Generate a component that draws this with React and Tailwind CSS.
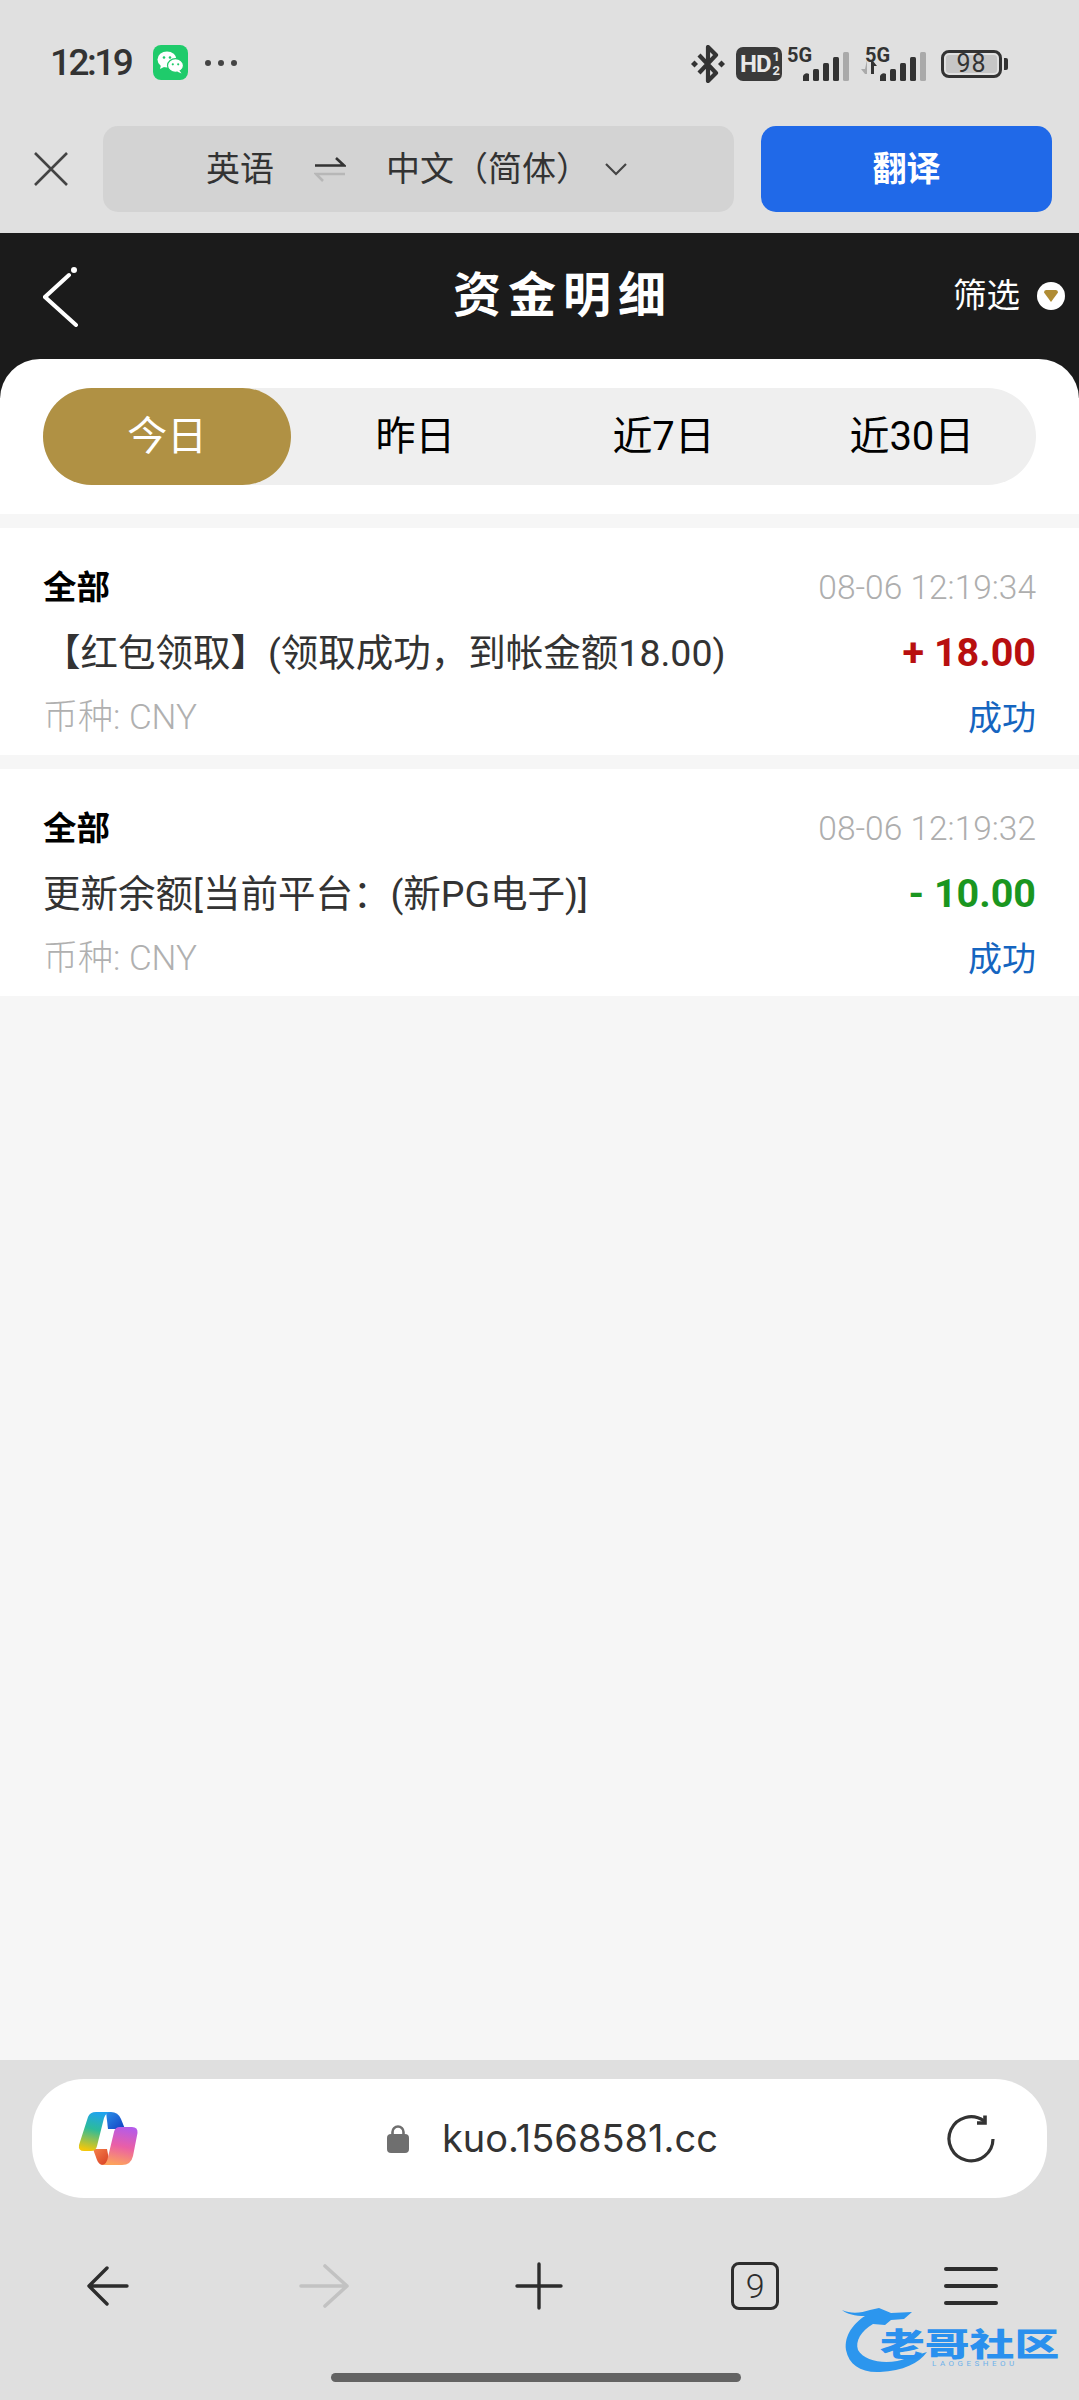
const records = [
  {
    time: '08-06 12:19:34',
    title: '【红包领取】(领取成功，到帐金额18.00)',
    amount: '+ 18.00',
    amountClass: 'text-[#b80f0f]',
  },
  {
    time: '08-06 12:19:32',
    title: '更新余额[当前平台：(新PG电子)]',
    amount: '- 10.00',
    amountClass: 'text-[#1a961f]',
  },
]

function WeChatIcon() {
  return (
    <svg width="35" height="35" viewBox="0 0 35 35" aria-hidden>
      <rect width="35" height="35" rx="8" fill="#1fcb6b" />
      <ellipse cx="14" cy="14.5" rx="9.5" ry="8" fill="#fff" />
      <path d="M8 20l-1 4 5-2.5z" fill="#fff" />
      <ellipse cx="22.5" cy="20.5" rx="8" ry="6.8" fill="#fff" stroke="#1fcb6b" strokeWidth="1.2" />
      <path d="M26.5 25.5l2 3-4.500-2z" fill="#fff" />
      <circle cx="11" cy="12.5" r="1.3" fill="#1fcb6b" />
      <circle cx="17" cy="12.5" r="1.3" fill="#1fcb6b" />
      <circle cx="19.8" cy="19.3" r="1.1" fill="#1fcb6b" />
      <circle cx="25.2" cy="19.3" r="1.1" fill="#1fcb6b" />
    </svg>
  )
}

function BluetoothIcon() {
  return (
    <svg width="34" height="38" viewBox="0 0 34 38" fill="none" stroke="#333" strokeWidth="4.2" aria-hidden>
      <path d="M8 10l17 18-8 8V2l8 8L8 28" strokeLinejoin="round" />
      <path d="M3.500 15.500l3.500 3.500-3.500 3.500L0 19z" fill="#333" stroke="none" />
      <path d="M30.500 15.500l3.500 3.500-3.500 3.500L27 19z" fill="#333" stroke="none" />
    </svg>
  )
}

function SignalBars({ arrows }) {
  return (
    <svg width={arrows ? 65 : 46} height="30" viewBox={arrows ? '-19 0 65 30' : '0 0 46 30'} aria-hidden>
      {arrows && (
        <>
          <path d="M-13 8v14h-2l-4-5h4" fill="#aaa" />
          <path d="M-9 22V9h2l4 5h-3v8z" fill="#333" />
        </>
      )}
      <path d="M0 24a4 4 0 0 1 6-2v7H0z" fill="#333" />
      <rect x="10" y="17" width="6" height="12" rx="1.5" fill="#333" />
      <rect x="20" y="11" width="6" height="18" rx="1.5" fill="#333" />
      <rect x="30" y="5" width="6" height="24" rx="1.5" fill="#333" />
      <rect x="40" y="0" width="6" height="29" rx="1.5" fill="#aaa" />
    </svg>
  )
}

function SwapIcon() {
  return (
    <svg width="32" height="26" viewBox="0 0 32 26" fill="none" strokeWidth="2.6" aria-hidden>
      <path d="M1 9.500h29L22 2" stroke="#333" />
      <path d="M31 18H2l7 7" stroke="#b7b7b7" />
    </svg>
  )
}

function CopilotLogo() {
  return (
    <svg width="60" height="56" viewBox="0 0 60 56" aria-hidden>
      <defs>
        <linearGradient id="cpLeft" x1="0.6" y1="0" x2="0.4" y2="1">
          <stop offset="0" stopColor="#1fa3ef" />
          <stop offset="0.45" stopColor="#2dbb9a" />
          <stop offset="1" stopColor="#f2c70c" />
        </linearGradient>
        <linearGradient id="cpRight" x1="0.6" y1="0" x2="0.4" y2="1">
          <stop offset="0" stopColor="#b55be8" />
          <stop offset="0.5" stopColor="#ea5fa6" />
          <stop offset="1" stopColor="#fda35c" />
        </linearGradient>
        <linearGradient id="cpTop" x1="0" y1="0" x2="1" y2="1">
          <stop offset="0" stopColor="#2a8fe8" />
          <stop offset="1" stopColor="#123fc2" />
        </linearGradient>
        <linearGradient id="cpBottom" x1="0" y1="0" x2="1" y2="1">
          <stop offset="0" stopColor="#f5814c" />
          <stop offset="1" stopColor="#d63c22" />
        </linearGradient>
      </defs>
      <path d="M28 1h5q7 0 10 7l4 10H30z" fill="url(#cpTop)" />
      <path d="M15 38h14l3 16h-7q-4 0-6-5z" fill="url(#cpBottom)" />
      <path d="M10 6q2-5 8-5h15q-5 0-7 6l-7 28q-1 5-6 5H6q-6 0-5-6z" fill="url(#cpLeft)" />
      <path d="M36 21q1-5 6-5h12q6 0 5.500 6L55 45q-2 9-11 9H24q5-1 6-8z" fill="url(#cpRight)" />
    </svg>
  )
}

function ReloadIcon() {
  return (
    <svg width="48" height="48" viewBox="0 0 48 48" fill="none" stroke="#333" strokeWidth="3.2" aria-hidden>
      <path d="M46 24a22 22 0 1 1-9-18" />
      <path d="M38 0.500v7.500h-8" strokeWidth="3.6" />
    </svg>
  )
}

function Watermark() {
  return (
    <div className="absolute top-[2305px] left-[841px] h-[68px] w-[224px]">
      <svg className="absolute top-0 left-0" width="90" height="68" viewBox="0 0 90 68" aria-hidden>
        <path
          d="M1 5C10 9 20 8 29 5L38 3 50 8 71 7 63 14 50 15 44 20 32 19C20 26 14 36 17 45 24 58 50 60 66 53L86 47C78 58 62 66 39 67 20 68 8 60 5 45 3 30 13 18 24 11 14 11 6 9 1 5Z"
          fill="#2c96ee"
        />
      </svg>
      <span className="absolute top-[21px] left-[39px] origin-left scale-x-[1.4] text-[32px] leading-[32px] font-black whitespace-nowrap text-[#2a90ee] [font-family:'Noto_Sans_CJK_SC',sans-serif]">
        老哥社区
      </span>
      <span className="absolute top-[54px] left-[91px] text-[8px] leading-[9px] tracking-[3.500px] whitespace-nowrap text-[#6fb2ea]">
        LAOGESHEOU
      </span>
    </div>
  )
}

export default function App() {
  return (
    <div className="relative flex h-[2400px] w-[1079px] flex-col overflow-hidden bg-[#f6f6f6] text-[#333] [font-family:Roboto,'Noto_Sans_CJK_SC',sans-serif]">
      {/* Phone status bar + translate bar */}
      <div className="h-[233px] shrink-0 bg-[#e0e0e0]">
        <div className="flex h-[126px] items-start pt-[45px] pr-[71px] pl-[50px]">
          <span className="w-[103px] text-[37px] leading-[36px] font-medium tracking-[-2.500px]">12:19</span>
          <WeChatIcon />
          <div className="ml-[17px] flex h-[35px] items-center gap-[7px]">
            <span className="size-[6px] rounded-full bg-[#444]" />
            <span className="size-[6px] rounded-full bg-[#444]" />
            <span className="size-[6px] rounded-full bg-[#444]" />
          </div>
          <div className="ml-auto flex items-center">
            <BluetoothIcon />
            <div className="ml-[11px] flex h-[34px] w-[46px] items-center rounded-[7px] bg-[#3a3a3a] pl-[4px] text-[#e8e8e8]">
              <span className="text-[24px] leading-none font-bold tracking-[-1px]">HD</span>
              <span className="ml-[2px] flex flex-col text-[13px] leading-[14px] font-bold">
                <span>1</span>
                <span>2</span>
              </span>
            </div>
            <div className="relative ml-[5px] h-[34px] w-[62px]">
              <span className="absolute top-[-2px] left-0 text-[20px] leading-[20px] font-bold">5G</span>
              <div className="absolute right-0 bottom-[-1px]"><SignalBars /></div>
            </div>
            <div className="relative ml-[12px] h-[34px] w-[65px]">
              <span className="absolute top-[-2px] left-[4px] text-[20px] leading-[20px] font-bold">5G</span>
              <div className="absolute right-0 bottom-[-1px]"><SignalBars arrows /></div>
            </div>
            <div className="ml-[15px] flex h-[28px] w-[61px] items-center justify-center rounded-[8px] border-[3px] border-[#333] p-[2px]">
              <span className="flex h-full w-full items-center justify-center rounded-[3px] bg-[#c6c6c6] text-[25px] font-normal tracking-[1px]">98</span>
            </div>
            <span className="ml-[2px] h-[12px] w-[4px] rounded-r-[2px] bg-[#333]" />
          </div>
        </div>
        <div className="flex h-[86px] items-center">
          <div className="flex w-[103px] justify-center pr-[2px]">
            <svg width="34" height="34" viewBox="0 0 34 34" fill="none" stroke="#444" strokeWidth="2.6" aria-hidden>
              <path d="M1 1l32 32M33 1L1 33" />
            </svg>
          </div>
          <div className="flex h-full w-[631px] items-center rounded-[15px] bg-[#d3d3d3] pl-[103px] text-[34px]">
            <span>英语</span>
            <span className="ml-[40px]"><SwapIcon /></span>
            <span className="ml-[40px]">中文（简体）</span>
            <svg className="ml-[15px]" width="22" height="13" viewBox="0 0 22 13" fill="none" stroke="#444" strokeWidth="2.2" aria-hidden>
              <path d="M1 1l10 10L21 1" />
            </svg>
          </div>
          <div className="ml-[27px] flex h-full w-[291px] items-center justify-center rounded-[15px] bg-[#2069e8] text-[34px] font-bold text-white">
            翻译
          </div>
        </div>
      </div>

      {/* Page header */}
      <div className="flex h-[165px] shrink-0 items-start bg-[#1b1b1b] pt-[34px] text-white">
        <svg className="ml-[43px]" width="36" height="60" viewBox="0 0 36 60" fill="none" stroke="#fff" strokeWidth="4" strokeLinecap="round" aria-hidden>
          <path d="M26 8L2 30l31 28" />
          <circle cx="31" cy="3" r="3" fill="#fff" stroke="none" />
        </svg>
        <h1 className="mt-[1px] ml-[374px] text-[48px] leading-[56px] font-bold tracking-[7px] whitespace-nowrap">资金明细</h1>
        <span className="mt-[7px] ml-[280px] text-[33.500px] leading-[44px] whitespace-nowrap">筛选</span>
        <span className="mt-[15px] ml-[17px] flex size-[28px] items-center justify-center rounded-full bg-white">
          <svg width="14" height="12" viewBox="0 0 14 12" aria-hidden>
            <path d="M0 2.500Q0 0 2 0h10q2 0 2 2.500L7 12z" fill="#b08c34" />
          </svg>
        </span>
      </div>

      {/* Body sheet overlaps the header */}
      <div className="-mt-[39px] flex h-[155px] shrink-0 items-start rounded-t-[40px] bg-white px-[43px] pt-[29px]">
        <div className="grid h-[97px] w-[993px] grid-cols-4 items-center rounded-full bg-[#efefef] text-center text-[40px] text-black">
          <div className="flex h-full items-center justify-center rounded-full bg-[#b09144] text-white">今日</div>
          <div>昨日</div>
          <div>近7日</div>
          <div>近30日</div>
        </div>
      </div>

      <div className="flex flex-col gap-[14px] pt-[14px]">
        {records.map((r) => (
          <div key={r.time} className="flex h-[227px] flex-col bg-white px-[43px] pt-[37px]">
            <div className="flex h-[46px] items-center justify-between">
              <span className="text-[33.500px] font-bold text-black">全部</span>
              <span className="text-[33.500px] font-light text-[#aeaeae]">{r.time}</span>
            </div>
            <div className="mt-[18px] flex h-[48px] items-center justify-between">
              <span className="text-[37.500px] text-[#333]">{r.title}</span>
              <span className={`text-[39.500px] font-bold ${r.amountClass}`}>{r.amount}</span>
            </div>
            <div className="mt-[18px] flex h-[46px] items-center justify-between">
              <span className="text-[35px] font-light text-[#b0b0b0]">币种: CNY</span>
              <span className="text-[34px] text-[#1565c0]">成功</span>
            </div>
          </div>
        ))}
      </div>

      {/* Browser bottom chrome */}
      <div className="mt-auto flex h-[340px] shrink-0 flex-col bg-[#dfdfdf] pt-[19px]">
        <div className="ml-[32px] flex h-[119px] w-[1015px] shrink-0 items-center rounded-[52px] bg-white pr-[52px] pl-[46px]">
          <CopilotLogo />
          <svg className="ml-[249px]" width="22" height="28" viewBox="0 0 22 28" aria-hidden>
            <path d="M5.500 11V7a5.500 5.500 0 0 1 11 0v4" fill="none" stroke="#6f6f6f" strokeWidth="2.6" />
            <rect y="9" width="22" height="19" rx="4" fill="#6f6f6f" />
          </svg>
          <span className="ml-[33px] text-[38px] text-[#333] [font-family:Inter,sans-serif]">kuo.1568581.cc</span>
          <div className="ml-auto"><ReloadIcon /></div>
        </div>
        <div className="mt-[64px] grid grid-cols-5 items-center justify-items-center">
          <svg width="42" height="40" viewBox="0 0 42 40" fill="none" stroke="#2d2d2d" strokeWidth="3.4" strokeLinecap="round" strokeLinejoin="round" aria-hidden>
            <path d="M40 20H2M20 2L2 20l18 18" />
          </svg>
          <svg width="50" height="44" viewBox="0 0 50 44" fill="none" stroke="#c2c2c2" strokeWidth="3.6" strokeLinecap="round" strokeLinejoin="round" aria-hidden>
            <path d="M2 22h46M26 2l22 20-22 20" />
          </svg>
          <svg width="48" height="48" viewBox="0 0 48 48" fill="none" stroke="#2d2d2d" strokeWidth="3.4" strokeLinecap="round" aria-hidden>
            <path d="M2 24h44M24 2v44" />
          </svg>
          <div className="flex h-[48px] w-[48px] items-center justify-center rounded-[8px] border-[3.500px] border-[#2d2d2d] text-[34px] leading-none font-light text-[#2d2d2d]">9</div>
          <div className="flex h-[38px] w-[54px] flex-col justify-between">
            <span className="h-[4px] rounded-full bg-[#2d2d2d]" />
            <span className="h-[4px] rounded-full bg-[#2d2d2d]" />
            <span className="h-[4px] rounded-full bg-[#2d2d2d]" />
          </div>
        </div>
        <div className="mt-[63px] ml-[331px] h-[9px] w-[410px] rounded-full bg-[#636363]" />
      </div>

      <Watermark />
    </div>
  )
}
